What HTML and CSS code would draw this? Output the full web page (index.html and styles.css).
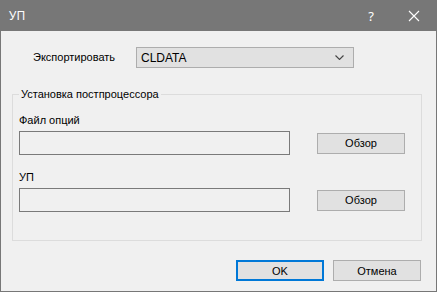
FILE: index.html
```html
<!DOCTYPE html>
<html lang="ru">
<head>
<meta charset="utf-8">
<title>УП</title>
<link rel="stylesheet" href="styles.css">
</head>
<body>
<div class="window">
  <div class="titlebar">
    <span class="title">УП</span>
    <span class="help">?</span>
    <span class="close">
      <svg width="12" height="12" viewBox="0 0 12 12"><path d="M1 1 L11 11 M11 1 L1 11" stroke="#fff" stroke-width="1.1" fill="none"/></svg>
    </span>
  </div>
  <div class="content">
    <div class="export-row">
      <span class="export-label">Экспортировать</span>
      <div class="combo">
        <span class="combo-text">CLDATA</span>
        <svg class="chev" width="9" height="5" viewBox="0 0 9 5"><path d="M0.5 0.5 L4.5 4.5 L8.5 0.5" stroke="#444" stroke-width="1.1" fill="none"/></svg>
      </div>
    </div>
    <div class="group">
      <span class="legend">Установка постпроцессора</span>
      <div class="label first">Файл опций</div>
      <div class="field-row">
        <div class="field"></div>
        <div class="btn">Обзор</div>
      </div>
      <div class="label">УП</div>
      <div class="field-row">
        <div class="field"></div>
        <div class="btn">Обзор</div>
      </div>
    </div>
    <div class="actions">
      <div class="btn ok">OK</div>
      <div class="btn">Отмена</div>
    </div>
  </div>
</div>
</body>
</html>
```
FILE: styles.css
```css
html, body {
  margin: 0;
  padding: 0;
  background: #f0f0f0;
}
.window {
  width: 437px;
  height: 292px;
  box-sizing: border-box;
  border: 1px solid #777777;
  border-top: 0;
  background: #f0f0f0;
  font-family: "Liberation Sans", Arial, sans-serif;
  font-size: 11px;
  color: #000;
  display: flex;
  flex-direction: column;
}
.titlebar {
  height: 31px;
  margin: 0 -1px;
  background: #777777;
  color: #fff;
  display: flex;
  align-items: center;
  font-family: "Noto Sans", "Open Sans", sans-serif;
  font-size: 12px;
  flex: none;
}
.title {
  margin-left: 9px;
  flex: 1;
}
.help {
  width: 16px;
  text-align: center;
  margin-right: 29px;
  font-size: 13px;
}
.close {
  width: 12px;
  height: 12px;
  margin-right: 17px;
  display: flex;
}
.content {
  padding: 0 14px 0 11px;
  display: flex;
  flex-direction: column;
}
.export-row {
  margin-top: 16px;
  display: flex;
  align-items: center;
  height: 21px;
}
.export-label {
  width: 103px;
  padding-left: 21px;
  margin-top: -1px;
}
.combo {
  width: 218px;
  height: 21px;
  box-sizing: border-box;
  border: 1px solid #adadad;
  background: #e1e1e1;
  display: flex;
  align-items: center;
  padding: 0 9px 0 4px;
}
.combo-text {
  flex: 1;
  font-size: 12px;
}
.chev {
  display: block;
}
.group {
  position: relative;
  margin-top: 26px;
  width: 410px;
  height: 147px;
  box-sizing: border-box;
  border: 1px solid #dcdcdc;
  padding: 0 0 0 6px;
  display: flex;
  flex-direction: column;
}
.legend {
  position: absolute;
  left: 6px;
  top: -8px;
  padding: 0 2px;
  background: #f0f0f0;
  line-height: 14px;
}
.label {
  line-height: 14px;
  margin-top: 15px;
}
.label.first {
  margin-top: 18px;
}
.field-row {
  display: flex;
  align-items: center;
  margin-top: 4px;
}
.field {
  width: 271px;
  height: 24px;
  box-sizing: border-box;
  border: 1px solid #7a7a7a;
  background: #f0f0f0;
}
.btn {
  width: 88px;
  height: 21px;
  box-sizing: border-box;
  border: 1px solid #adadad;
  background: #e1e1e1;
  display: flex;
  align-items: center;
  justify-content: center;
  font-size: 11px;
}
.field-row .btn {
  margin-left: 27px;
}
.actions {
  display: flex;
  justify-content: flex-end;
  gap: 9px;
  margin-top: 19px;
  margin-right: 1px;
}
.btn.ok {
  border: 2px solid #0078d7;
}
```
